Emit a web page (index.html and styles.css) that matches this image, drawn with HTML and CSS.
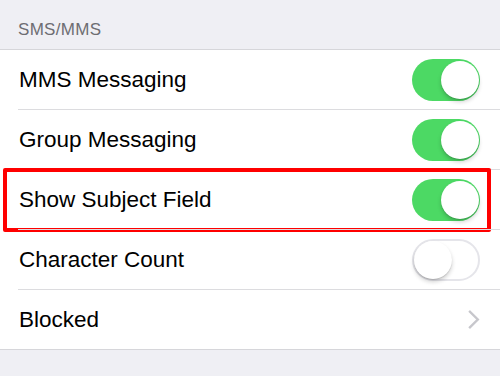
FILE: index.html
```html
<!DOCTYPE html>
<html>
<head>
<meta charset="utf-8">
<link rel="stylesheet" href="styles.css">
</head>
<body>
<div class="header">SMS/MMS</div>
<div class="list">
  <div class="row"><span class="label">MMS Messaging</span><span class="toggle on"><span class="knob"></span></span></div>
  <div class="row"><span class="label">Group Messaging</span><span class="toggle on"><span class="knob"></span></span></div>
  <div class="row highlighted"><span class="label">Show Subject Field</span><span class="toggle on"><span class="knob"></span></span></div>
  <div class="row"><span class="label">Character Count</span><span class="toggle off"><span class="knob"></span></span></div>
  <div class="row"><span class="label">Blocked</span>
    <svg class="chevron" width="12" height="19" viewBox="0 0 12 19"><path d="M2 1.8 L9.8 9.5 L2 17.2" fill="none" stroke="#c7c7cc" stroke-width="2.4" stroke-linecap="square"/></svg>
  </div>
</div>
</body>
</html>
```
FILE: styles.css
```css
html, body {
  margin: 0;
  padding: 0;
  background: #efeff4;
  font-family: "Liberation Sans", Arial, sans-serif;
  width: 500px;
  height: 376px;
  overflow: hidden;
}
.header {
  height: 49px;
  box-sizing: border-box;
  padding: 20px 0 0 18px;
  font-size: 17px;
  color: #6d6d72;
  letter-spacing: 0.3px;
}
.list {
  background: #fff;
  border-top: 1px solid #d6d6da;
  border-bottom: 1px solid #d6d6da;
}
.row {
  position: relative;
  height: 59px;
  display: flex;
  align-items: center;
  justify-content: space-between;
  padding: 0 20px 0 19px;
}
.row + .row::before {
  content: "";
  position: absolute;
  left: 18px;
  right: 0;
  top: -1px;
  height: 1px;
  background: #dcdcdf;
}
.row + .row {
  margin-top: 1px;
}
.label {
  font-size: 22.5px;
  color: #000;
}
.highlighted::after {
  content: "";
  position: absolute;
  left: 3px;
  right: 9px;
  top: -2px;
  bottom: -3px;
  border: 4px solid #ff0000;
  border-radius: 2px;
}
.toggle {
  position: relative;
  width: 68px;
  height: 42px;
  border-radius: 21px;
  box-sizing: border-box;
}
.toggle.on {
  background: #4cd964;
}
.toggle.off {
  background: #fff;
  border: 2px solid #e5e5ea;
}
.knob {
  position: absolute;
  width: 38px;
  height: 38px;
  border-radius: 50%;
  background: #fff;
  top: 2px;
  box-shadow: 0 3px 4px rgba(0,0,0,0.18), 0 1px 1px rgba(0,0,0,0.12);
}
.toggle.on .knob {
  right: 1px;
}
.toggle.off .knob {
  left: 0;
  top: 0;
}
.chevron {
  margin-right: 0;
}
```
